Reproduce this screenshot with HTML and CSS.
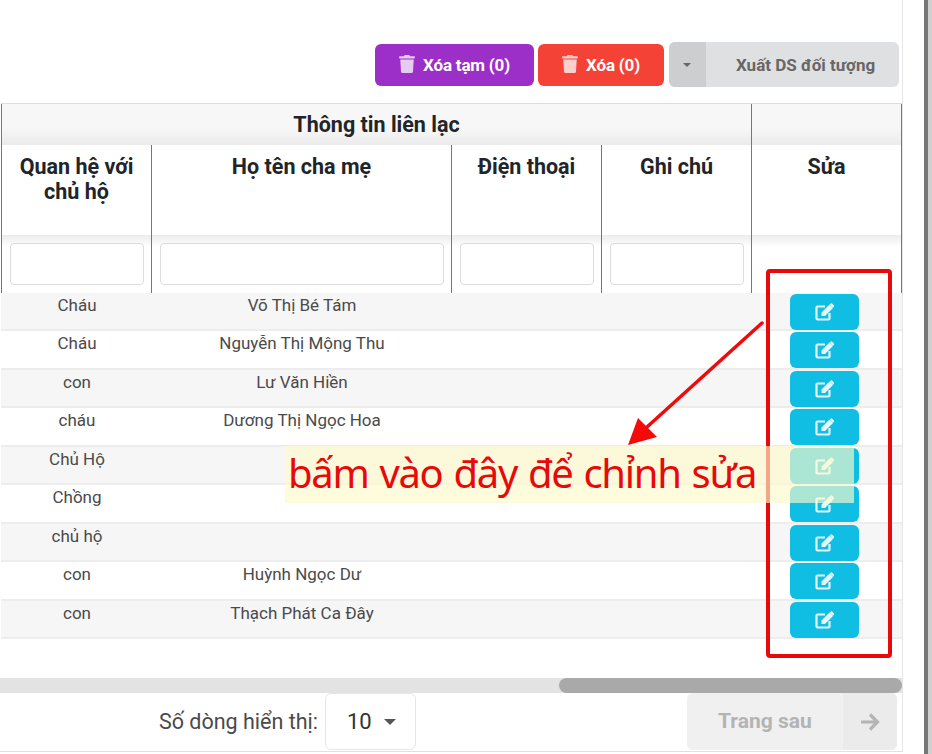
FILE: index.html
```html
<!DOCTYPE html>
<html lang="vi">

<head>
    <meta charset="UTF-8">
    <title>Danh sách đối tượng</title>
    <link rel="stylesheet" href="styles.css">
</head>

<body>
    <svg class="defs" width="0" height="0">
        <symbol id="trash" viewBox="0 0 448 512">
            <path d="M432 32H312l-9.4-18.7A24 24 0 0 0 281.1 0H166.8a23.72 23.72 0 0 0-21.4 13.3L136 32H16A16 16 0 0 0 0 48v32a16 16 0 0 0 16 16h416a16 16 0 0 0 16-16V48a16 16 0 0 0-16-16zM53.2 467a48 48 0 0 0 47.9 45h245.8a48 48 0 0 0 47.9-45L416 128H32z" />
        </symbol>
        <symbol id="edit" viewBox="0 0 20 18">
            <path d="M10 3.500H2.500a1 1 0 0 0-1 1v11a1 1 0 0 0 1 1h11a1 1 0 0 0 1-1V10" fill="none" stroke="currentColor" stroke-width="2.200" />
            <path d="M6.500 9.500L14.500 1.500L18 5L10 13H6.500zM15.500 .8a1.300 1.300 0 0 1 1.800 0l1.400 1.400a1.300 1.300 0 0 1 0 1.800l-.7 .7L14.800 1.500z" fill="currentColor" />
        </symbol>
    </svg>

    <main class="page">
        <div class="toolbar">
            <button class="btn btn-purple"><svg class="icon-trash"><use href="#trash" /></svg>Xóa tạm (0)</button>
            <button class="btn btn-red"><svg class="icon-trash"><use href="#trash" /></svg>Xóa (0)</button>
            <div class="export">
                <span class="export-caret"></span>
                <span class="export-label">Xuất DS đối tượng</span>
            </div>
        </div>

        <table class="grid">
            <colgroup>
                <col class="col-s">
                <col class="col-l">
                <col class="col-s">
                <col class="col-s">
                <col class="col-e">
            </colgroup>
            <thead>
                <tr class="group-row">
                    <th colspan="4">Thông tin liên lạc</th>
                    <th class="last"></th>
                </tr>
                <tr class="title-row">
                    <th>Quan hệ với chủ hộ</th>
                    <th>Họ tên cha mẹ</th>
                    <th>Điện thoại</th>
                    <th>Ghi chú</th>
                    <th class="last">Sửa</th>
                </tr>
                <tr class="filter-row">
                    <th><input class="filter"></th>
                    <th><input class="filter"></th>
                    <th><input class="filter"></th>
                    <th><input class="filter"></th>
                    <th class="last"></th>
                </tr>
            </thead>
            <tbody>
                <tr><td>Cháu</td><td>Võ Thị Bé Tám</td><td></td><td></td><td><button class="btn-edit"><svg><use href="#edit" /></svg></button></td></tr>
                <tr><td>Cháu</td><td>Nguyễn Thị Mộng Thu</td><td></td><td></td><td><button class="btn-edit"><svg><use href="#edit" /></svg></button></td></tr>
                <tr><td>con</td><td>Lư Văn Hiền</td><td></td><td></td><td><button class="btn-edit"><svg><use href="#edit" /></svg></button></td></tr>
                <tr><td>cháu</td><td>Dương Thị Ngọc Hoa</td><td></td><td></td><td><button class="btn-edit"><svg><use href="#edit" /></svg></button></td></tr>
                <tr><td>Chủ Hộ</td><td></td><td></td><td></td><td><button class="btn-edit"><svg><use href="#edit" /></svg></button></td></tr>
                <tr><td>Chồng</td><td></td><td></td><td></td><td><button class="btn-edit"><svg><use href="#edit" /></svg></button></td></tr>
                <tr><td>chủ hộ</td><td></td><td></td><td></td><td><button class="btn-edit"><svg><use href="#edit" /></svg></button></td></tr>
                <tr><td>con</td><td>Huỳnh Ngọc Dư</td><td></td><td></td><td><button class="btn-edit"><svg><use href="#edit" /></svg></button></td></tr>
                <tr><td>con</td><td>Thạch Phát Ca Đây</td><td></td><td></td><td><button class="btn-edit"><svg><use href="#edit" /></svg></button></td></tr>
            </tbody>
        </table>

        <div class="hscroll"><div class="hscroll-thumb"></div></div>

        <div class="pager">
            <span class="pager-label">Số dòng hiển thị:</span>
            <div class="pager-select">10<span class="pager-caret"></span></div>
            <div class="pager-next">
                <span class="pager-next-label">Trang sau</span>
                <span class="pager-next-arrow">
                    <svg width="20" height="20" viewBox="0 0 20 20"><path d="M1 10H17M10 2.500L17.500 10L10 17.500" fill="none" stroke="currentColor" stroke-width="3.200" /></svg>
                </span>
            </div>
        </div>
    </main>

    <div class="side-line"></div>

    <!-- chu thich ve tay tren anh -->
    <div class="mark-box"></div>
    <svg class="mark-arrow" width="160" height="140" viewBox="0 0 160 140">
        <path d="M135 2L20 106" stroke="#ee0b0b" stroke-width="3.500" stroke-linecap="round" />
        <path d="M1 124L11 97L30 116z" fill="#f50a0a" />
    </svg>
    <div class="mark-note">bấm vào đây để chỉnh sửa</div>
</body>

</html>
```

FILE: styles.css
```css
body {
    margin: 0;
    background: #fff;
    font-family: 'Roboto', sans-serif;
    color: #212529;
    display: flex;
    height: 754px;
    overflow: hidden;
}

.defs {
    position: absolute;
}

.page {
    width: 902px;
    height: 751px;
    border-right: 1px solid #e6e6e6;
    border-bottom: 1px solid #e0e0e0;
    flex: none;
}

.side-line {
    width: 4px;
    height: 754px;
    margin-left: 21px;
    background: #777;
    border-right: 4px solid #d0d0d0;
    flex: none;
}

/* toolbar */
.toolbar {
    display: flex;
    justify-content: flex-end;
    align-items: center;
    gap: 4px;
    padding: 42px 3px 0 0;
    height: 45px;
    margin-bottom: 16px;
}

.btn {
    height: 42px;
    border: none;
    border-radius: 6px;
    color: #fff;
    font-family: 'Roboto', sans-serif;
    font-size: 17px;
    font-weight: 700;
    letter-spacing: -0.2px;
    display: flex;
    align-items: center;
    justify-content: center;
    gap: 8px;
    padding: 1px 0 0;
}

.btn-purple {
    width: 159px;
    background: #9c2fc7;
}

.btn-red {
    width: 126px;
    background: #f44236;
}

.icon-trash {
    width: 16px;
    height: 18px;
    fill: #fff;
    opacity: 0.75;
    margin-top: -2px;
}

.export {
    width: 230px;
    height: 45px;
    margin-left: 1px;
    border-radius: 6px;
    overflow: hidden;
    display: flex;
    background: #dfe0e1;
}

.export-caret {
    width: 37px;
    background: #cdcecf;
    position: relative;
}

.export-caret::after {
    content: "";
    position: absolute;
    left: 14px;
    top: 21px;
    border: 4px solid transparent;
    border-top: 4px solid #666;
    border-bottom: none;
}

.export-label {
    flex: 1;
    padding-left: 30px;
    color: #676767;
    font-size: 17px;
    font-weight: 700;
    line-height: 47px;
}

/* table */
.grid {
    border-collapse: separate;
    border-spacing: 0;
    table-layout: fixed;
    width: 901px;
    margin-left: 1px;
    border-top: 1px solid #ddd;
}

.col-s {
    width: 150px;
}

.col-l {
    width: 300px;
}

.col-e {
    width: 151px;
}

.grid th {
    border-left: 1px solid #777;
    padding: 0;
    font-size: 21.5px;
    font-weight: 700;
    line-height: 25px;
    vertical-align: top;
}

.grid th.last {
    border-right: 1px solid #777;
}

.group-row th {
    height: 41px;
    line-height: 41px;
    background: linear-gradient(#f7f7f7 60%, #ebebeb);
}

.title-row th {
    height: 90px;
    padding: 9px 8px 0 8px;
    box-sizing: border-box;
}

.filter-row th {
    height: 58px;
    background: linear-gradient(#ececec, #fff 12px);
    padding: 8px 7px 0 8px;
    box-sizing: border-box;
}

.filter-row th.last {
    padding: 0;
}

.filter {
    display: block;
    width: 100%;
    height: 42px;
    box-sizing: border-box;
    border: 1px solid #ddd;
    border-radius: 4px;
    background: #fff;
}

.grid td {
    height: 39px;
    padding: 0 0 0 2px;
    box-sizing: border-box;
    border-bottom: 2px solid #ededed;
    text-align: center;
    vertical-align: top;
    font-size: 17px;
    line-height: 24px;
    color: #4a4a4a;
}

.grid tbody tr:nth-child(odd) td {
    height: 38px;
    background: #f6f6f6;
}

.btn-edit {
    display: block;
    width: 69px;
    height: 36px;
    margin: 1px 0 -2px 37px;
    padding: 0;
    border: none;
    border-radius: 6px;
    background: #10bde3;
    color: #e4f8fc;
}

.btn-edit svg {
    display: block;
    width: 20px;
    height: 18px;
    margin: 0 auto;
}

/* scrollbar and pager */
.hscroll {
    height: 15px;
    margin-top: 39px;
    background: #e3e3e3;
    display: flex;
    justify-content: flex-end;
}

.hscroll-thumb {
    width: 343px;
    background: #a9a9a9;
    border-radius: 8px;
}

.pager {
    display: flex;
    align-items: flex-start;
    height: 57px;
    padding-left: 159px;
}

.pager-label {
    width: 166px;
    font-size: 21.5px;
    line-height: 57px;
    color: #4a4a4a;
}

.pager-select {
    width: 91px;
    height: 57px;
    box-sizing: border-box;
    border: 1px solid #e6e6e6;
    border-radius: 6px;
    padding-left: 21px;
    font-size: 22px;
    line-height: 55px;
    color: #333;
    display: flex;
    align-items: center;
    gap: 12px;
}

.pager-caret {
    border: 6px solid transparent;
    border-top: 6px solid #555;
    border-bottom: none;
}

.pager-next {
    width: 210px;
    height: 57px;
    margin-left: 271px;
    border-radius: 6px;
    overflow: hidden;
    display: flex;
    background: #f0f0f0;
    color: #b4b4b4;
    font-size: 21px;
    font-weight: 700;
}

.pager-next-label {
    width: 156px;
    padding-left: 31px;
    box-sizing: border-box;
    line-height: 57px;
}

.pager-next-arrow {
    flex: 1;
    background: #ebebeb;
    display: flex;
    align-items: center;
    justify-content: center;
}

/* annotation drawn over the shot */
.mark-box {
    position: absolute;
    left: 766px;
    top: 269px;
    width: 118px;
    height: 381px;
    border: 4px solid #e60a0a;
    border-radius: 4px;
}

.mark-arrow {
    position: absolute;
    left: 627px;
    top: 321px;
}

.mark-note {
    position: absolute;
    left: 285px;
    top: 446px;
    width: 569px;
    height: 57px;
    padding-left: 3px;
    box-sizing: border-box;
    background: rgba(255, 250, 205, 0.65);
    color: #e60a0a;
    font-family: 'Noto Sans', sans-serif;
    font-size: 40px;
    letter-spacing: -1.3px;
    word-spacing: 1.8px;
    line-height: 54px;
    white-space: nowrap;
}
```
